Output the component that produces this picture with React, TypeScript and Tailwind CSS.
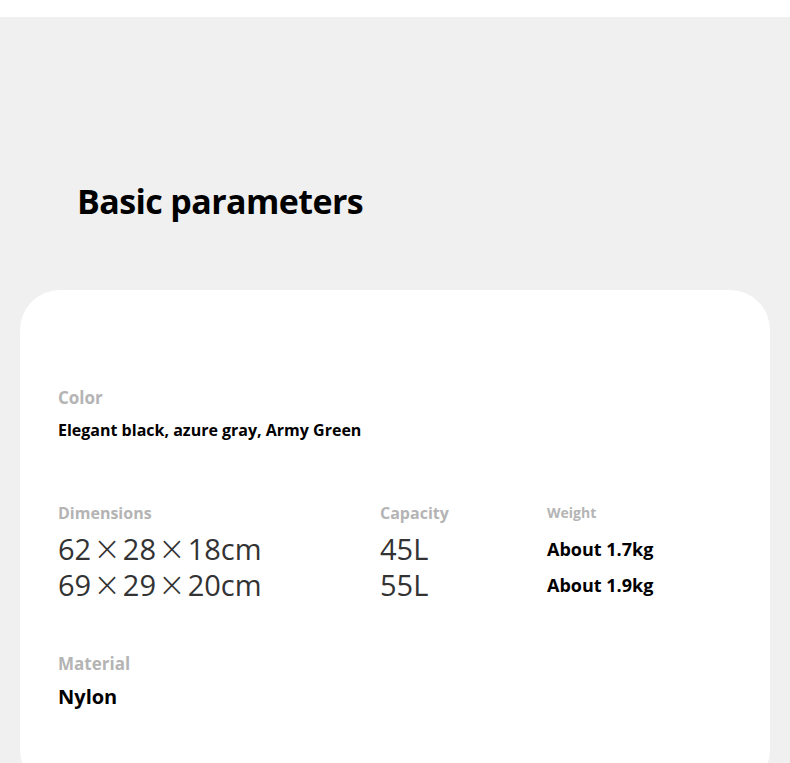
export default function App() {
  const font = { fontFamily: '"Open Sans", "Noto Sans", sans-serif' };
  const times = (
    <span className="inline-block align-top leading-[36px] text-[33px] font-['DejaVu_Sans',sans-serif] font-light px-[2px]">×</span>
  );
  return (
    <div className="w-[790px] h-[763px] overflow-hidden bg-[#f0f0f0]" style={font}>
      <div className="h-[17px] bg-white" />

      <h1 className="pl-[77px] pt-[159px] text-[34px] leading-[50px] font-bold tracking-[-0.6px] text-black">
        Basic parameters
      </h1>

      <div className="mx-[20px] mt-[64px] h-[500px] rounded-[40px] bg-white pl-[38px] pt-[96px]">
        <div className="text-[17px] font-bold leading-[24px] text-[#b4b4b4]">Color</div>
        <div className="mt-[9px] text-[16px] font-bold leading-[22px] text-black">
          Elegant black, azure gray, Army Green
        </div>

        <div className="mt-[61px] flex">
          <div className="w-[322px]">
            <div className="text-[16px] font-bold leading-[22px] text-[#b4b4b4]">Dimensions</div>
            <div className="mt-[7px] text-[29px] leading-[36px] text-[#333]">62{times}28{times}18cm</div>
            <div className="text-[29px] leading-[36px] text-[#333]">69{times}29{times}20cm</div>
          </div>
          <div className="w-[167px]">
            <div className="text-[16px] font-bold leading-[22px] text-[#b4b4b4]">Capacity</div>
            <div className="mt-[7px] text-[29px] leading-[36px] text-[#333]">45L</div>
            <div className="text-[29px] leading-[36px] text-[#333]">55L</div>
          </div>
          <div>
            <div className="text-[14px] font-bold leading-[22px] text-[#b4b4b4]">Weight</div>
            <div className="mt-[7px] text-[18px] font-bold leading-[36px] text-black">About 1.7kg</div>
            <div className="text-[18px] font-bold leading-[36px] text-black">About 1.9kg</div>
          </div>
        </div>

        <div className="mt-[49px] text-[17px] font-bold leading-[24px] text-[#b4b4b4]">Material</div>
        <div className="mt-[8px] text-[20px] font-bold leading-[26px] text-black">Nylon</div>
      </div>
    </div>
  );
}
